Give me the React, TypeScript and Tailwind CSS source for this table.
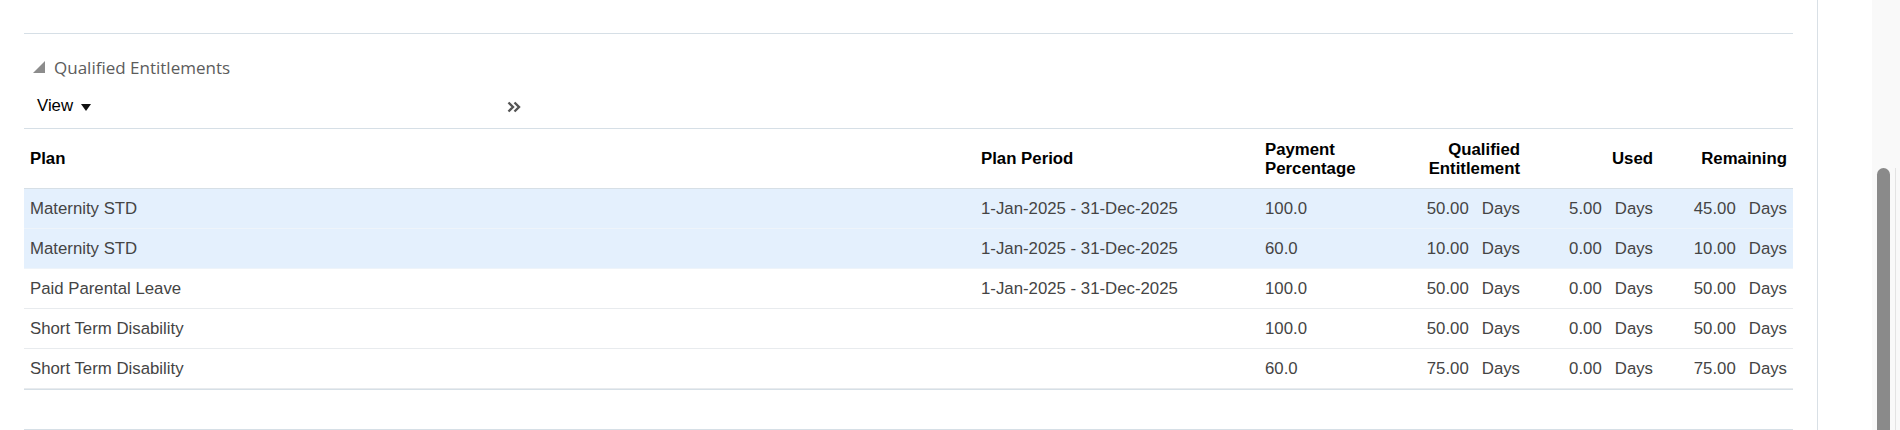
import React from 'react';

type Row = {
  plan: string;
  period: string;
  pct: string;
  qualified: string;
  used: string;
  remaining: string;
  selected?: boolean;
};

const rows: Row[] = [
  { plan: 'Maternity STD', period: '1-Jan-2025 - 31-Dec-2025', pct: '100.0', qualified: '50.00', used: '5.00', remaining: '45.00', selected: true },
  { plan: 'Maternity STD', period: '1-Jan-2025 - 31-Dec-2025', pct: '60.0', qualified: '10.00', used: '0.00', remaining: '10.00', selected: true },
  { plan: 'Paid Parental Leave', period: '1-Jan-2025 - 31-Dec-2025', pct: '100.0', qualified: '50.00', used: '0.00', remaining: '50.00' },
  { plan: 'Short Term Disability', period: '', pct: '100.0', qualified: '50.00', used: '0.00', remaining: '50.00' },
  { plan: 'Short Term Disability', period: '', pct: '60.0', qualified: '75.00', used: '0.00', remaining: '75.00' },
];

const cols = 'grid grid-cols-[951px_284px_133px_134px_133px_134px]';

function DaysCell({ value }: { value: string }) {
  return (
    <div className="flex items-center justify-end px-[6px]">
      <span>{value}</span>
      <span className="ml-[13px]">Days</span>
    </div>
  );
}

export default function App() {
  return (
    <div className="flex h-[430px] w-full overflow-hidden bg-white font-['Liberation_Sans',Arial,sans-serif] text-[16.8px]">
      {/* main region */}
      <div className="w-[1818px] shrink-0 border-r border-[#d9e0e6] px-[24px]">
        <div className="h-[33px]" />
        <div className="border-t border-[#d6dfe6]" />

        {/* section title */}
        <div className="flex h-[58px] items-center pt-[10px]">
          <svg width="14" height="14" viewBox="0 0 14 14" className="ml-[8px] -mt-[3px]">
            <polygon points="13,1 13,13 1,13" fill="#8c8c8c" />
          </svg>
          <span className="ml-[8px] font-['Open_Sans',sans-serif] text-[17px] text-[#5c5c5c]">
            Qualified Entitlements
          </span>
        </div>

        {/* toolbar */}
        <div className="flex h-[36px] items-center pb-[8px]">
          <button className="ml-[13px] flex items-center text-black">
            View
            <svg width="10" height="7" viewBox="0 0 10 7" className="ml-[8px] mt-[3px]">
              <polygon points="0,0 10,0 5,7" fill="#111" />
            </svg>
          </button>
          <svg width="14" height="12" viewBox="0 0 14 12" className="ml-[416px] mt-[1px]">
            <path d="M1.5 1.5 L6 6 L1.5 10.5 M7.5 1.5 L12 6 L7.5 10.5" fill="none" stroke="#555" strokeWidth="2.4" />
          </svg>
        </div>

        {/* table */}
        <div className={`${cols} h-[61px] border-y border-[#d6dfe6] font-bold leading-[19px] text-black`}>
          <div className="flex items-center px-[6px]">Plan</div>
          <div className="flex items-center px-[6px]">Plan Period</div>
          <div className="flex items-center px-[6px]">
            Payment
            <br />
            Percentage
          </div>
          <div className="flex items-center justify-end px-[6px] text-right">
            Qualified
            <br />
            Entitlement
          </div>
          <div className="flex items-center justify-end px-[6px]">Used</div>
          <div className="flex items-center justify-end px-[6px]">Remaining</div>
        </div>

        {rows.map((r, i) => (
          <div
            key={i}
            className={`${cols} h-[40px] border-b text-[#444] ${
              r.selected ? 'border-[#eef4fa] bg-[#e4f0fd]' : 'border-[#e8ebee] bg-white'
            }`}
          >
            <div className="flex items-center px-[6px]">{r.plan}</div>
            <div className="flex items-center px-[6px]">{r.period}</div>
            <div className="flex items-center px-[6px]">{r.pct}</div>
            <DaysCell value={r.qualified} />
            <DaysCell value={r.used} />
            <DaysCell value={r.remaining} />
          </div>
        ))}

        <div className="h-[40px] border-t border-[#d6dfe6]" />
        <div className="border-t border-[#d6dfe6]" />
      </div>

      <div className="w-[54px] shrink-0" />

      {/* scrollbar */}
      <div className="flex w-[28px] shrink-0 bg-[#f9f9f9] pl-[5px] pt-[168px]">
        <div className="w-[13px] rounded-t-full bg-[#8a8a8a]" />
        <div className="ml-[5px] w-px bg-[#e3e3e3]" />
      </div>
    </div>
  );
}
